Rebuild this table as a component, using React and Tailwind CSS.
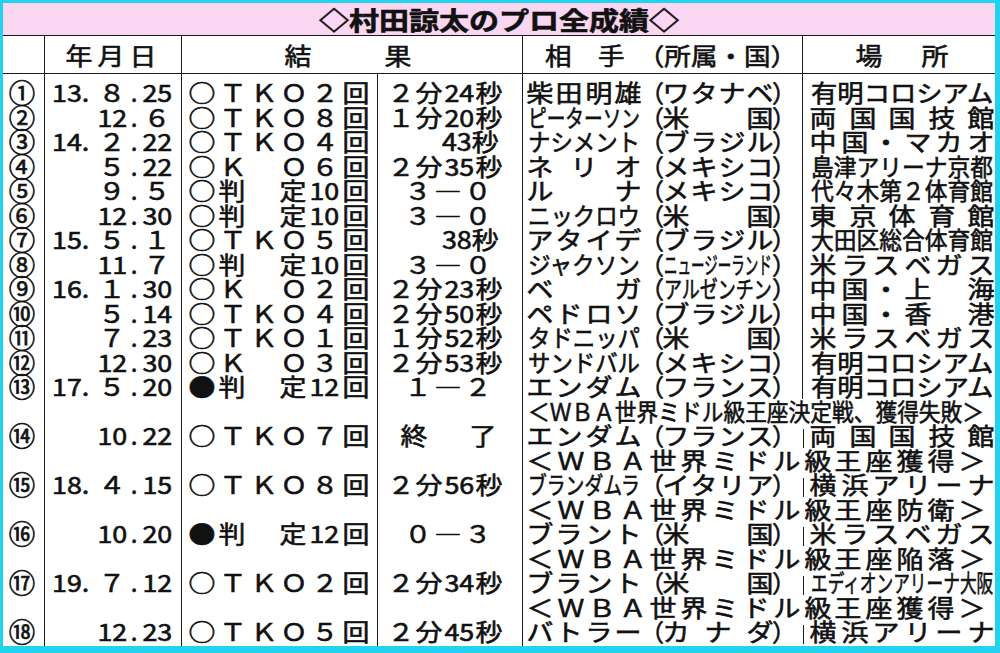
import { useLayoutEffect, useRef, useState } from 'react'

const tokenize = (s) => s.match(/[0-9A-Za-z]+|./gu) || []

// newspaper type is set a little wide
const WIDE = 1.12

// spreads the text over the box, or squeezes it when it is too long
function Fit({ text, className = '' }) {
  const boxRef = useRef(null)
  const txtRef = useRef(null)
  const [scale, setScale] = useState(null)

  useLayoutEffect(() => {
    const measure = () => {
      if (!boxRef.current || !txtRef.current) return
      const w = boxRef.current.clientWidth
      const n = txtRef.current.offsetWidth
      setScale(w / n)
    }
    measure()
    if (document.fonts) document.fonts.ready.then(measure)
  }, [text])

  if (scale !== null && scale >= WIDE) {
    return (
      <div ref={boxRef} className={`flex shrink-0 justify-between whitespace-pre ${className}`}>
        {tokenize(text).map((t, i) => (
          <span key={i} className="inline-block scale-x-[1.12]">
            {t}
          </span>
        ))}
      </div>
    )
  }
  return (
    <div ref={boxRef} className={`shrink-0 overflow-x-clip whitespace-pre ${className}`}>
      <span
        ref={txtRef}
        className="inline-block origin-left"
        style={scale ? { transform: `scaleX(${scale})` } : undefined}
      >
        {text}
      </span>
    </div>
  )
}

const W = ({ children, className = '' }) => (
  <span className={`inline-block scale-x-[1.12] ${className}`}>{children}</span>
)

const bouts = [
  { no: '①', y: '13.', m: '８', d: '25', res: '○ＴＫＯ２回', time: '２分24秒', name: '柴田明雄', from: 'ワタナベ', venue: '有明コロシアム' },
  { no: '②', y: '', m: '12', d: '６', res: '○ＴＫＯ８回', time: '１分20秒', name: 'ピーターソン', from: '米国', venue: '両国国技館' },
  { no: '③', y: '14.', m: '２', d: '22', res: '○ＴＫＯ４回', time: '43秒', name: 'ナシメント', from: 'ブラジル', venue: '中国・マカオ' },
  { no: '④', y: '', m: '５', d: '22', res: '○Ｋ　Ｏ６回', time: '２分35秒', name: 'ネリオ', from: 'メキシコ', venue: '島津アリーナ京都' },
  { no: '⑤', y: '', m: '９', d: '５', res: '○判　定10回', time: '３―０', name: 'ルナ', from: 'メキシコ', venue: '代々木第２体育館' },
  { no: '⑥', y: '', m: '12', d: '30', res: '○判　定10回', time: '３―０', name: 'ニックロウ', from: '米国', venue: '東京体育館' },
  { no: '⑦', y: '15.', m: '５', d: '１', res: '○ＴＫＯ５回', time: '38秒', name: 'アタイデ', from: 'ブラジル', venue: '大田区総合体育館' },
  { no: '⑧', y: '', m: '11', d: '７', res: '○判　定10回', time: '３―０', name: 'ジャクソン', from: 'ニュージーランド', venue: '米ラスベガス' },
  { no: '⑨', y: '16.', m: '１', d: '30', res: '○Ｋ　Ｏ２回', time: '２分23秒', name: 'ベガ', from: 'アルゼンチン', venue: '中国・上　海' },
  { no: '⑩', y: '', m: '５', d: '14', res: '○ＴＫＯ４回', time: '２分50秒', name: 'ペドロソ', from: 'ブラジル', venue: '中国・香　港' },
  { no: '⑪', y: '', m: '７', d: '23', res: '○ＴＫＯ１回', time: '１分52秒', name: 'タドニッパ', from: '米国', venue: '米ラスベガス' },
  { no: '⑫', y: '', m: '12', d: '30', res: '○Ｋ　Ｏ３回', time: '２分53秒', name: 'サンドバル', from: 'メキシコ', venue: '有明コロシアム' },
  { no: '⑬', y: '17.', m: '５', d: '20', res: '●判　定12回', time: '１―２', name: 'エンダム', from: 'フランス', venue: '有明コロシアム', note: '＜ＷＢＡ世界ミドル級王座決定戦、獲得失敗＞' },
  { no: '⑭', y: '', m: '10', d: '22', res: '○ＴＫＯ７回', time: '終了', name: 'エンダム', from: 'フランス', venue: '両国国技館', split: true, note: '＜ＷＢＡ世界ミドル級王座獲得＞' },
  { no: '⑮', y: '18.', m: '４', d: '15', res: '○ＴＫＯ８回', time: '２分56秒', name: 'ブランダムラ', from: 'イタリア', venue: '横浜アリーナ', split: true, note: '＜ＷＢＡ世界ミドル級王座防衛＞' },
  { no: '⑯', y: '', m: '10', d: '20', res: '●判　定12回', time: '０―３', name: 'ブラント', from: '米国', venue: '米ラスベガス', split: true, note: '＜ＷＢＡ世界ミドル級王座陥落＞' },
  { no: '⑰', y: '19.', m: '７', d: '12', res: '○ＴＫＯ２回', time: '２分34秒', name: 'ブラント', from: '米国', venue: 'エディオンアリーナ大阪', split: true, note: '＜ＷＢＡ世界ミドル級王座獲得＞' },
  { no: '⑱', y: '', m: '12', d: '23', res: '○ＴＫＯ５回', time: '２分45秒', name: 'バトラー', from: 'カナダ', venue: '横浜アリーナ', split: true },
]

const line = 'border-r border-[#1a1a1a]'

function Time({ t }) {
  if (t.includes('分')) return <Fit text={t} className="ml-[11px] w-[112px]" />
  if (t.endsWith('秒'))
    return (
      <div className="pr-[23px] text-right">
        <W className="origin-right">{t}</W>
      </div>
    )
  if (t.includes('―')) return <Fit text={t} className="ml-[28px] w-[84px]" />
  return <Fit text={t} className="ml-[24px] w-[93px]" />
}

function BoutRow({ b }) {
  return (
    <>
      <div className={`${line} pr-[4px] text-center`}>
        <span className="inline-block scale-110">{b.no}</span>
      </div>
      <div className={`${line} flex pl-[7px]`}>
        <span className="w-[44px] shrink-0">
          <W className="origin-left">{b.y}</W>
        </span>
        <span className="w-[32px] shrink-0 text-center">
          <W>{b.m}</W>
        </span>
        <span className="w-[12px] shrink-0 text-center">.</span>
        <span className="w-[34px] shrink-0 text-center">
          <W>{b.d}</W>
        </span>
      </div>
      <div className={line}>
        <Fit text={b.res} className="ml-[8px] w-[178px]" />
      </div>
      <div className={line}>
        <Time t={b.time} />
      </div>
      <div className={`flex pl-[5px] ${b.split ? '' : line}`}>
        <Fit text={b.name} className="w-[112px]" />
        <span className="w-[24px] shrink-0">（</span>
        <Fit text={b.from} className="w-[108px]" />
        <span className="w-[24px] shrink-0">）</span>
      </div>
      <div className="flex">
        {b.split && <div className="mt-[6px] border-l border-[#1a1a1a]" />}
        <Fit text={b.venue} className={b.split ? 'ml-[7px] w-[182px]' : 'ml-[8px] w-[182px]'} />
      </div>
    </>
  )
}

function NoteRow({ text }) {
  return (
    <>
      <div className={line} />
      <div className={line} />
      <div className={line} />
      <div className={line} />
      <div className="col-span-2">
        <Fit text={text} className="ml-[5px] w-[456px]" />
      </div>
    </>
  )
}

function BoutRowWithNote({ b }) {
  return (
    <>
      <BoutRow b={b} />
      {b.note && <NoteRow text={b.note} />}
    </>
  )
}

export default function App() {
  return (
    <div className="h-[653px] w-[1000px] bg-[#22d3ee] pb-[7px] pl-[3px] pr-[5px] pt-[3px] font-['Noto_Sans_CJK_JP',sans-serif] text-[#111] [-webkit-text-stroke:0.6px_#111]">
      <div className="flex h-full flex-col bg-white">
        {/* title */}
        <div className="flex h-[33px] shrink-0 items-center justify-center border-b border-[#1a1a1a] bg-[#fad6f2]">
          <span className="inline-block scale-x-[1.2] text-[25px] font-bold leading-[32px]">◇村田諒太のプロ全成績◇</span>
        </div>

        {/* header */}
        <div className="grid h-[38px] shrink-0 grid-cols-[42px_137px_341px_280px_192px] border-b border-[#1a1a1a] text-[24px] leading-[37px]">
          <div className={line} />
          <div className={line}>
            <Fit text="年月日" className="ml-[22px] w-[88px]" />
          </div>
          <div className={line}>
            <Fit text="結果" className="ml-[104px] w-[124px]" />
          </div>
          <div className={line}>
            <Fit text="相　手　（所属・国）" className="ml-[22px] w-[252px]" />
          </div>
          <div>
            <Fit text="場所" className="ml-[54px] w-[90px]" />
          </div>
        </div>

        {/* body */}
        <div className="grid flex-1 grid-cols-[42px_137px_196px_145px_280px_192px] grid-rows-[6px_repeat(23,24.5px)_1fr] text-[24px] leading-[24.5px]">
          <div className={line} />
          <div className={line} />
          <div className={line} />
          <div className={line} />
          <div className={line} />
          <div />
          {bouts.map((b) => (
            <BoutRowWithNote key={b.no} b={b} />
          ))}
          <div className={line} />
          <div className={line} />
          <div className={line} />
          <div className={line} />
          <div className="col-span-2" />
        </div>
      </div>
    </div>
  )
}
